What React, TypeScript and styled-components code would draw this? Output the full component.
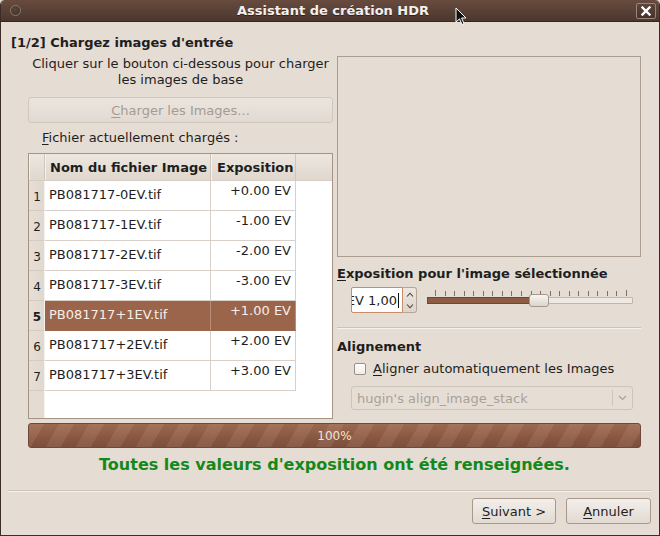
import React from "react";
import styled, { createGlobalStyle } from "styled-components";

const Global = createGlobalStyle`
  html, body { margin: 0; padding: 0; background: #e5dcd3; }
  body { font-family: "DejaVu Sans", "Liberation Sans", sans-serif; font-size: 13px; color: #1e1e1e; }
  * { box-sizing: border-box; }
`;

const Window = styled.div`
  position: relative;
  width: 660px;
  height: 536px;
  background: #e5dcd3;
  border: 1px solid #3b2d26;
  border-top: none;
  border-radius: 5px 5px 0 0;
  overflow: hidden;
  display: flex;
  flex-direction: column;
`;

const TitleBar = styled.div`
  height: 22px;
  flex-shrink: 0;
  display: grid;
  grid-template-columns: 1fr auto 1fr;
  align-items: center;
  padding: 0 3px 0 9px;
  background: linear-gradient(#684b3e, #4b372e);
  border-bottom: 1px solid #35271f;
`;

const TitleText = styled.div`
  color: #f4efea;
  font-weight: bold;
  font-size: 13px;
  text-shadow: 0 1px 0 rgba(0, 0, 0, 0.45);
`;

const MenuDot = styled.div`
  justify-self: start;
  width: 11px;
  height: 11px;
  border-radius: 50%;
  border: 1px solid #8c786c;
  background: radial-gradient(circle at 40% 35%, #5a463c, #3e2e26);
`;

const CloseBtn = styled.div`
  justify-self: end;
  width: 20px;
  height: 16px;
  border: 1px solid #9a8477;
  border-radius: 2px;
  background: linear-gradient(#5d463b, #45332b);
  display: flex;
  align-items: center;
  justify-content: center;
`;

const Body = styled.div`
  display: flex;
  flex-direction: column;
  padding-top: 13px;
`;

const Heading = styled.div`
  padding-left: 10px;
  font-weight: bold;
  line-height: 16px;
`;

const Main = styled.div`
  display: flex;
  gap: 4px;
  margin: 5px 0 0 27px;
  width: 613px;
`;

const LeftCol = styled.div`
  width: 305px;
  display: flex;
  flex-direction: column;
`;

const RightCol = styled.div`
  width: 304px;
  display: flex;
  flex-direction: column;
`;

const Instructions = styled.div`
  line-height: 16px;
  text-align: center;
`;

const U = styled.span`
  text-decoration: underline;
  text-underline-offset: 2px;
`;

const WideButton = styled.div`
  margin-top: 9px;
  height: 26px;
  border: 1px solid #d0c7bd;
  border-radius: 3px;
  background: linear-gradient(#ebe5df, #e2dad2);
  color: #a59b91;
  display: flex;
  align-items: center;
  justify-content: center;
`;

const FieldLabel = styled.div`
  margin-top: 7px;
  padding-left: 14px;
  line-height: 16px;
`;

const Table = styled.div`
  margin-top: 7px;
  height: 266px;
  border: 1px solid #a59584;
  background: #fff;
  display: flex;
  flex-direction: column;
  overflow: hidden;
`;

const cols = "16px 166px 85px 1fr";

const HeaderRow = styled.div`
  display: grid;
  grid-template-columns: ${cols};
  height: 27px;
  flex-shrink: 0;
  background: linear-gradient(#ede7e0, #e0d7cd);
  border-bottom: 1px solid #d6cdc3;
`;

const HeaderCell = styled.div<{ $last?: boolean; $pad?: number }>`
  display: flex;
  align-items: center;
  padding-left: ${(p) => p.$pad ?? 0}px;
  font-weight: bold;
  white-space: nowrap;
  overflow: hidden;
  ${(p) =>
    p.$last
      ? ""
      : "border-right: 1px solid #cfc5ba; box-shadow: inset 1px 0 0 #f6f2ee;"}
`;

const Row = styled.div`
  display: grid;
  grid-template-columns: ${cols};
  height: 30px;
  flex-shrink: 0;
`;

const RowLabel = styled.div<{ $sel?: boolean }>`
  background: linear-gradient(to right, #e7dfd6, #e0d7ce);
  box-shadow: inset -1px 0 0 #f5f1ed, inset 0 -1px 0 #d4cbc1;
  text-align: center;
  padding-top: 8px;
  font-size: 12px;
  line-height: 16px;
  font-weight: ${(p) => (p.$sel ? "bold" : "normal")};
`;

const Cell = styled.div<{ $sel?: boolean; $right?: boolean }>`
  background: ${(p) => (p.$sel ? "#9a654b" : "#fff")};
  color: ${(p) => (p.$sel ? "#f6eee8" : "#1e1e1e")};
  border-right: 1px solid ${(p) => (p.$sel ? "#b98d78" : "#d8d0c8")};
  border-bottom: 1px solid ${(p) => (p.$sel ? "#9a654b" : "#d8d0c8")};
  line-height: 16px;
  white-space: nowrap;
  padding: ${(p) => (p.$right ? "2px 4px 0 0" : "6px 0 0 4px")};
  text-align: ${(p) => (p.$right ? "right" : "left")};
`;

const Blank = styled.div`
  background: #fff;
`;

const Filler = styled.div`
  flex: 1;
  background: linear-gradient(to right, #e4dbd2 0, #e4dbd2 15px, #f5f1ed 15px, #f5f1ed 16px, #fff 16px);
`;

const Preview = styled.div`
  height: 201px;
  border: 1px solid #ab9d8f;
`;

const BoldLabel = styled.div<{ $mt: number }>`
  margin-top: ${(p) => p.$mt}px;
  font-weight: bold;
  line-height: 16px;
`;

const SpinRow = styled.div`
  margin-top: 5px;
  height: 26px;
  display: flex;
  padding-left: 14px;
  gap: 10px;
`;

const Spinner = styled.div`
  display: flex;
  width: 66px;
  height: 26px;
`;

const SpinInput = styled.div`
  width: 52px;
  height: 26px;
  background: #fff;
  border: 1px solid #c98c6a;
  border-radius: 2px 0 0 2px;
  overflow: hidden;
  display: flex;
  justify-content: flex-end;
  align-items: center;
  padding-right: 3px;
  white-space: nowrap;
`;

const SpinText = styled.span`
  flex-shrink: 0;
`;

const Caret = styled.span`
  flex-shrink: 0;
  width: 1px;
  height: 15px;
  margin-left: 1px;
  background: #111;
`;

const SpinButtons = styled.div`
  width: 14px;
  height: 26px;
  border: 1px solid #b5a797;
  border-left: none;
  border-radius: 0 3px 3px 0;
  background: linear-gradient(#ede7e1, #ddd4ca);
  display: flex;
  flex-direction: column;
  align-items: center;
  justify-content: space-around;
`;

const Slider = styled.div`
  position: relative;
  width: 206px;
  height: 26px;
`;

const Ticks = styled.svg`
  position: absolute;
  left: 0;
  top: 2px;
`;

const Track = styled.div`
  position: absolute;
  left: 0;
  right: 0;
  top: 10px;
  height: 7px;
  border: 1px solid #c3b7aa;
  border-radius: 1px;
  background: #efe9e3;
`;

const TrackFill = styled.div`
  position: absolute;
  left: 0;
  top: 10px;
  height: 7px;
  border: 1px solid #6e4736;
  background: #8e5b45;
`;

const Thumb = styled.div`
  position: absolute;
  top: 7px;
  width: 20px;
  height: 13px;
  border: 1px solid #a8988a;
  border-radius: 3px;
  background: linear-gradient(#f8f5f2, #ddd5cc);
`;

const Separator = styled.div<{ $mt: number }>`
  margin-top: ${(p) => p.$mt}px;
  height: 2px;
  border-top: 1px solid #cbc2b8;
  border-bottom: 1px solid #f5f1ed;
`;

const CheckRow = styled.div`
  margin-top: 6px;
  padding-left: 17px;
  display: flex;
  align-items: center;
  gap: 7px;
  line-height: 16px;
`;

const CheckBox = styled.div`
  width: 12px;
  height: 12px;
  border: 1px solid #9c8e82;
  border-radius: 2px;
  background: linear-gradient(#ffffff, #f0ebe6);
`;

const Combo = styled.div`
  margin: 9px 0 0 14px;
  width: 282px;
  height: 24px;
  border: 1px solid #cdc4ba;
  border-radius: 3px;
  background: #e6ded5;
  color: #aaa196;
  display: flex;
  align-items: center;
`;

const ComboText = styled.div`
  flex: 1;
  padding-left: 5px;
`;

const ComboArrow = styled.div`
  width: 20px;
  height: 16px;
  border-left: 1px solid #cdc4ba;
  display: flex;
  align-items: center;
  justify-content: center;
`;

const Progress = styled.div`
  margin: 4px 0 0 27px;
  width: 613px;
  height: 25px;
  border: 1px solid #6f4838;
  border-radius: 3px;
  background:
    repeating-linear-gradient(120deg, rgba(255, 235, 220, 0.09) 0 13px, rgba(0, 0, 0, 0) 13px 26px),
    linear-gradient(#9c684f, #8a5842 55%, #7c4e3b);
  color: #f1e3da;
  font-size: 12px;
  display: flex;
  align-items: center;
  justify-content: center;
`;

const Status = styled.div`
  margin: 8px 0 0 27px;
  width: 613px;
  line-height: 18px;
  text-align: center;
  font-size: 16px;
  font-weight: bold;
  color: #14891a;
`;

const ButtonRow = styled.div`
  margin-top: 6px;
  padding-right: 8px;
  display: flex;
  justify-content: flex-end;
  gap: 10px;
`;

const Button = styled.div<{ $w: number }>`
  width: ${(p) => p.$w}px;
  height: 26px;
  border: 1px solid #a8998b;
  border-radius: 3px;
  background: linear-gradient(#f3efeb, #e2dad2);
  display: flex;
  align-items: center;
  justify-content: center;
`;

const Cursor = styled.svg`
  position: absolute;
  left: 454px;
  top: 7px;
`;

const files = [
  ["PB081717-0EV.tif", "+0.00 EV"],
  ["PB081717-1EV.tif", "-1.00 EV"],
  ["PB081717-2EV.tif", "-2.00 EV"],
  ["PB081717-3EV.tif", "-3.00 EV"],
  ["PB081717+1EV.tif", "+1.00 EV"],
  ["PB081717+2EV.tif", "+2.00 EV"],
  ["PB081717+3EV.tif", "+3.00 EV"],
];
const selected = 4;

const tickXs = Array.from({ length: 21 }, (_, i) => 8 + i * 9.55);

export default function App() {
  return (
    <>
      <Global />
      <Window>
        <TitleBar>
          <MenuDot />
          <TitleText>Assistant de création HDR</TitleText>
          <CloseBtn>
            <svg width="10" height="10" viewBox="0 0 10 10">
              <path d="M1.5 1.5 L8.5 8.5 M8.5 1.5 L1.5 8.5" stroke="#fff" strokeWidth="2.4" strokeLinecap="square" />
            </svg>
          </CloseBtn>
        </TitleBar>
        <Body>
          <Heading>[1/2] Chargez images d'entrée</Heading>
          <Main>
            <LeftCol>
              <Instructions>
                Cliquer sur le bouton ci-dessous pour charger
                <br />
                les images de base
              </Instructions>
              <WideButton>
                <span>
                  <U>C</U>harger les Images...
                </span>
              </WideButton>
              <FieldLabel>
                <U>F</U>ichier actuellement chargés :
              </FieldLabel>
              <Table>
                <HeaderRow>
                  <HeaderCell />
                  <HeaderCell $pad={5}>Nom du fichier Image</HeaderCell>
                  <HeaderCell $pad={6}>Exposition</HeaderCell>
                  <HeaderCell $last />
                </HeaderRow>
                {files.map(([name, ev], i) => (
                  <Row key={name}>
                    <RowLabel $sel={i === selected}>{i + 1}</RowLabel>
                    <Cell $sel={i === selected}>{name}</Cell>
                    <Cell $sel={i === selected} $right>
                      {ev}
                    </Cell>
                    <Blank />
                  </Row>
                ))}
                <Filler />
              </Table>
            </LeftCol>
            <RightCol>
              <Preview />
              <BoldLabel $mt={9}>
                <U>E</U>xposition pour l'image sélectionnée
              </BoldLabel>
              <SpinRow>
                <Spinner>
                  <SpinInput>
                    <SpinText>EV 1,00</SpinText>
                    <Caret />
                  </SpinInput>
                  <SpinButtons>
                    <svg width="8" height="5" viewBox="0 0 8 5">
                      <path d="M1 4.5 L4 1.2 L7 4.5" fill="none" stroke="#4a4038" strokeWidth="1.1" />
                    </svg>
                    <svg width="8" height="5" viewBox="0 0 8 5">
                      <path d="M1 0.5 L4 3.8 L7 0.5" fill="none" stroke="#4a4038" strokeWidth="1.1" />
                    </svg>
                  </SpinButtons>
                </Spinner>
                <Slider>
                  <Ticks width="206" height="8" viewBox="0 0 206 8">
                    {tickXs.map((x, i) => (
                      <rect
                        key={i}
                        x={Math.round(x)}
                        y={i === 0 || i === 20 ? 1 : 2}
                        width="1"
                        height={i === 0 || i === 20 ? 6 : 5}
                        fill="#7d7167"
                      />
                    ))}
                  </Ticks>
                  <Track />
                  <TrackFill style={{ width: 104 }} />
                  <Thumb style={{ left: 102 }} />
                </Slider>
              </SpinRow>
              <Separator $mt={14} />
              <BoldLabel $mt={10}>Alignement</BoldLabel>
              <CheckRow>
                <CheckBox />
                <span>
                  <U>A</U>ligner automatiquement les Images
                </span>
              </CheckRow>
              <Combo>
                <ComboText>hugin's align_image_stack</ComboText>
                <ComboArrow>
                  <svg width="9" height="6" viewBox="0 0 9 6">
                    <path d="M1 1 L4.5 4.5 L8 1" fill="none" stroke="#aaa196" strokeWidth="1.2" />
                  </svg>
                </ComboArrow>
              </Combo>
            </RightCol>
          </Main>
          <Progress>100%</Progress>
          <Status>Toutes les valeurs d'exposition ont été renseignées.</Status>
          <Separator $mt={16} style={{ marginLeft: 7, width: 643 }} />
          <ButtonRow>
            <Button $w={84}>
              <span>
                <U>S</U>uivant &gt;
              </span>
            </Button>
            <Button $w={85}>
              <span>
                <U>A</U>nnuler
              </span>
            </Button>
          </ButtonRow>
        </Body>
        <Cursor width="12" height="20" viewBox="0 0 12 20">
          <path d="M1 1 L1 15 L4.5 11.8 L7 17.5 L9 16.6 L6.6 11 L11 11 Z" fill="#111" stroke="#fff" strokeWidth="1" strokeLinejoin="round" />
        </Cursor>
      </Window>
    </>
  );
}
